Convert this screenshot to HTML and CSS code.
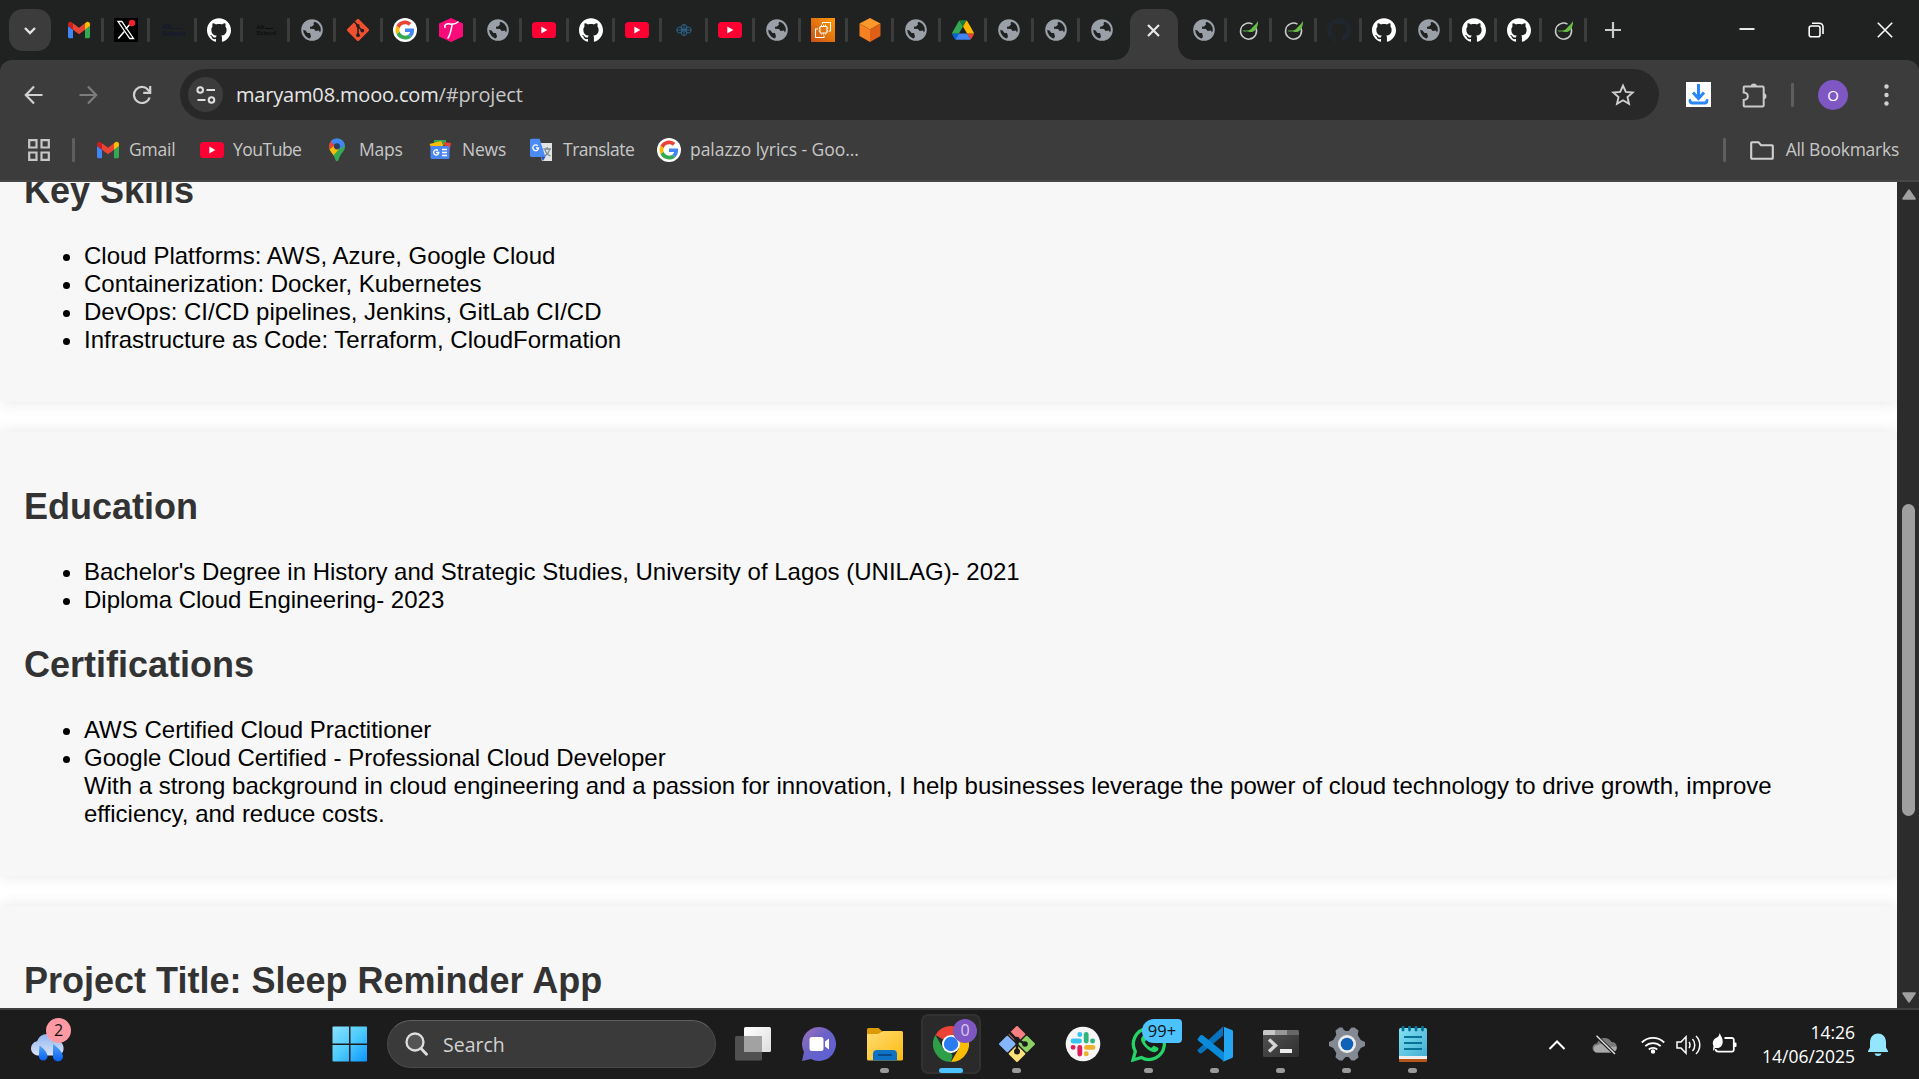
FILE: index.html
```html
<!DOCTYPE html>
<html lang="en">
<head>
<meta charset="utf-8">
<title>maryam08.mooo.com/#project</title>
<link rel="stylesheet" href="styles.css">
</head>
<body>
<svg class="sprite" width="0" height="0" aria-hidden="true">
  <defs>
    <linearGradient id="winA" x1="0" y1="0" x2="1" y2="1"><stop offset="0" stop-color="#8be2ff"/><stop offset=".5" stop-color="#4ccbfd"/><stop offset="1" stop-color="#0f94ff"/></linearGradient>
    <linearGradient id="ec2g" x1="0" y1="1" x2="1" y2="0"><stop offset="0" stop-color="#c8511b"/><stop offset="1" stop-color="#f90"/></linearGradient>
    <linearGradient id="chatg" x1="0" y1="0" x2="1" y2="1"><stop offset="0" stop-color="#a06fb8"/><stop offset=".45" stop-color="#6a63c8"/><stop offset="1" stop-color="#5b5fd6"/></linearGradient>
    <linearGradient id="foldg" x1="0" y1="0" x2="1" y2="1"><stop offset="0" stop-color="#ffdc72"/><stop offset="1" stop-color="#fdbb12"/></linearGradient>
    <linearGradient id="noteg" x1="0" y1="0" x2="1" y2="1"><stop offset="0" stop-color="#83e2f5"/><stop offset="1" stop-color="#41acd0"/></linearGradient>
    <linearGradient id="termg" x1="0" y1="0" x2="1" y2="1"><stop offset="0" stop-color="#535353"/><stop offset="1" stop-color="#303030"/></linearGradient>
    <linearGradient id="cloudg" x1="0" y1="0" x2="0" y2="1"><stop offset="0" stop-color="#8fb5f0"/><stop offset="1" stop-color="#d9e3f6"/></linearGradient>
    <linearGradient id="dropg" x1="0" y1="0" x2="0" y2="1"><stop offset="0" stop-color="#56a4f8"/><stop offset="1" stop-color="#0560f5"/></linearGradient>
    <linearGradient id="viewg" x1="0" y1="0" x2="1" y2="1"><stop offset="0" stop-color="#fff"/><stop offset="1" stop-color="#dedede"/></linearGradient>
  </defs>
  <symbol id="globe" viewBox="0 0 24 24"><circle cx="12" cy="12" r="9.800" fill="#202121" stroke="#9aa0a8" stroke-width="2"/><path fill="#9aa0a8" d="M2 11.500C2 6 6.500 2 12 2c2 0 3 .4 3.500.8L13.500 5 14 6.500 12 8.500l-2 .3v2l4 .3 1.600 2 3.400-.5.8 1.700 2-1.500C21 18 17 22 12 22l-2.500-.6L11 18.600l-1-3.600H7.500L5.500 12.500 2 11.500z"/></symbol>
  <symbol id="github" viewBox="0 0 24 24"><path d="M12 .297c-6.630 0-12 5.373-12 12 0 5.303 3.438 9.800 8.205 11.385.6.113.82-.258.82-.577 0-.285-.01-1.040-.015-2.040-3.338.724-4.042-1.610-4.042-1.610C4.422 18.070 3.633 17.700 3.633 17.700c-1.087-.744.084-.729.084-.729 1.205.084 1.838 1.236 1.838 1.236 1.070 1.835 2.809 1.305 3.495.998.108-.776.417-1.305.76-1.605-2.665-.3-5.466-1.332-5.466-5.930 0-1.310.465-2.380 1.235-3.220-.135-.303-.54-1.523.105-3.176 0 0 1.005-.322 3.300 1.230.96-.267 1.980-.399 3-.405 1.020.006 2.040.138 3 .405 2.280-1.552 3.285-1.230 3.285-1.230.645 1.653.24 2.873.12 3.176.765.84 1.230 1.910 1.230 3.220 0 4.610-2.805 5.625-5.475 5.920.42.36.81 1.096.81 2.220 0 1.606-.015 2.896-.015 3.286 0 .315.21.69.825.57C20.565 22.092 24 17.592 24 12.297c0-6.627-5.373-12-12-12"/></symbol>
  <symbol id="gmail" viewBox="52 42 88 66"><path fill="#4285f4" d="M58 108h14V74L52 59v43c0 3.320 2.690 6 6 6"/><path fill="#34a853" d="M120 108h14c3.320 0 6-2.690 6-6V59l-20 15"/><path fill="#fbbc04" d="M120 48v26l20-15v-8c0-7.420-8.470-11.650-14.400-7.200"/><path fill="#ea4335" d="M72 74V48l24 18 24-18v26L96 92"/><path fill="#c5221f" d="M52 51v8l20 15V48l-5.600-4.200c-5.940-4.450-14.400-.22-14.400 7.200"/></symbol>
  <symbol id="google" viewBox="0 0 48 48"><circle cx="24" cy="24" r="24" fill="#fff"/><g transform="translate(5 5) scale(.79)"><path fill="#EA4335" d="M24 9.500c3.540 0 6.710 1.220 9.210 3.600l6.850-6.850C35.900 2.380 30.470 0 24 0 14.620 0 6.510 5.380 2.560 13.220l7.980 6.190C12.430 13.720 17.740 9.500 24 9.500z"/><path fill="#4285F4" d="M46.980 24.550c0-1.570-.15-3.090-.38-4.550H24v9.020h12.940c-.58 2.960-2.260 5.480-4.780 7.180l7.730 6c4.510-4.180 7.090-10.360 7.090-17.650z"/><path fill="#FBBC05" d="M10.530 28.590c-.48-1.450-.76-2.990-.76-4.590s.27-3.140.76-4.590l-7.980-6.190C.92 16.460 0 20.120 0 24c0 3.880.92 7.540 2.560 10.780l7.970-6.190z"/><path fill="#34A853" d="M24 48c6.480 0 11.930-2.130 15.890-5.810l-7.730-6c-2.150 1.450-4.920 2.300-8.160 2.300-6.260 0-11.570-4.220-13.470-9.910l-7.980 6.190C6.510 42.620 14.620 48 24 48z"/></g></symbol>
  <symbol id="youtube" viewBox="0 0 24 24"><rect y="4" width="24" height="16" rx="3.600" fill="#ff0033"/><path fill="#fff" d="M9.300 8.500v7l6-3.500z"/></symbol>
  <symbol id="spring" viewBox="0 0 24 24"><path fill="none" stroke="#c8cacb" stroke-width="1.500" d="M15.500 6.200A8 8 0 1 0 18.800 9.800"/><path fill="#68bd45" d="M21 3C19.500 6 17 7.500 15 10c-2 2.500-4 2.800-7.500 2.500H5.500c1 1.500 2.500 1 4 .8 3 1 6.500 1 8-.5C20 10.500 21.500 6 21 3z"/></symbol>
</svg>

<header class="tabstrip">
  <button class="tab-search"><svg width="14" height="9" viewBox="0 0 14 9"><path d="M2 2l5 5 5-5" fill="none" stroke="#e3e3e3" stroke-width="2.400"/></svg></button>
  <div class="tabs">
    <div class="tab"><svg class="i22"><use href="#gmail"/></svg></div>
    <div class="tab"><svg class="i24" viewBox="0 0 24 24"><path fill="#000" d="M0 0h24v24H0z"/><path d="M4 3.500h3.800L19.500 20.500h-3.700z" fill="none" stroke="#fff" stroke-width="1.300"/><path d="M18.500 3.500l-6.800 7.500M10.300 13.400l-6 7" stroke="#fff" stroke-width="1.500"/><circle cx="18" cy="5" r="3.200" fill="#f4212e"/></svg></div>
    <div class="tab"><span class="alt alt-navy">Alt<i></i><br>School</span></div>
    <div class="tab"><svg class="i24 white"><use href="#github"/></svg></div>
    <div class="tab"><span class="alt alt-black">Alt<i></i><br>School</span></div>
    <div class="tab"><svg class="i24"><use href="#globe"/></svg></div>
    <div class="tab"><svg class="i24" viewBox="0 0 24 24"><rect x="3.800" y="3.800" width="16.400" height="16.400" rx="1.300" transform="rotate(45 12 12)" fill="#f05030"/><path d="M8.200 3.800L12 7.500v9.800M12 8.500l4.300 4.200" fill="none" stroke="#202121" stroke-width="1.600"/><circle cx="11.900" cy="7.900" r="1.800" fill="#202121"/><circle cx="12" cy="17.200" r="1.900" fill="#202121"/><circle cx="16.300" cy="12.600" r="1.900" fill="#202121"/></svg></div>
    <div class="tab"><svg class="i24"><use href="#google"/></svg></div>
    <div class="tab"><svg class="i24" viewBox="0 0 24 24"><path fill="#fb0a7a" d="M12 0l12 5.500v13L12 24 0 18.500v-13z"/><path d="M6 9.500C5 6.500 8 5.500 11 6s5.500 0 8-2M13.500 6C12 10 12 16 9 20" fill="none" stroke="#fff" stroke-width="1.500" stroke-linecap="round"/></svg></div>
    <div class="tab"><svg class="i24"><use href="#globe"/></svg></div>
    <div class="tab"><svg class="i24"><use href="#youtube"/></svg></div>
    <div class="tab"><svg class="i24 white"><use href="#github"/></svg></div>
    <div class="tab"><svg class="i24"><use href="#youtube"/></svg></div>
    <div class="tab"><svg class="i24" viewBox="0 0 24 24" fill="none" stroke="#2c6288" stroke-width="1"><circle cx="12" cy="9.500" r="3"/><circle cx="7.800" cy="12" r="3"/><circle cx="16.200" cy="12" r="3"/><circle cx="12" cy="14.500" r="3"/><path d="M4.800 12h14.400M12 6.500v11"/></svg></div>
    <div class="tab"><svg class="i24"><use href="#youtube"/></svg></div>
    <div class="tab"><svg class="i24"><use href="#globe"/></svg></div>
    <div class="tab"><svg class="i24" viewBox="0 0 24 24"><path fill="url(#ec2g)" d="M0 0h24v24H0z"/><g fill="none" stroke="#fff" stroke-width="1.100"><rect x="9" y="8.500" width="7" height="6.500" rx=".8"/><path d="M10.500 8V6.800M12.500 8V6.800M14.500 8V6.800M10.500 16.500v-1M12.500 16.500v-1M14.500 16.500v-1M7.800 10H9M7.800 13H9M16 10h1.300M16 13h1.300"/><path d="M11.500 6V4.500h8V13h-1.500M7 11H4.500v8.500H13V17.500"/></g></svg></div>
    <div class="tab"><svg class="i24" viewBox="0 0 24 24"><path fill="#fb982b" d="M12 0l10.500 5.500L12 11.500 1.500 5.500z"/><path fill="#f58120" d="M1.500 5.500L12 11.500V24L1.500 18z"/><path fill="#e05f16" d="M22.500 5.500L12 11.500V24l10.500-6z"/></svg></div>
    <div class="tab"><svg class="i24"><use href="#globe"/></svg></div>
    <div class="tab"><svg class="i22" viewBox="0 0 87.300 78"><path d="m6.600 66.850 3.850 6.650c.8 1.400 1.950 2.500 3.300 3.300l13.750-23.800h-27.500c0 1.550.4 3.100 1.200 4.500z" fill="#0066da"/><path d="m43.650 25-13.750-23.800c-1.350.8-2.500 1.900-3.300 3.300l-25.400 44a9.060 9.060 0 0 0 -1.200 4.500h27.500z" fill="#34a853"/><path d="m73.550 76.800c1.350-.8 2.500-1.900 3.300-3.300l1.600-2.750 7.650-13.250c.8-1.400 1.200-2.950 1.200-4.500h-27.500l5.850 11.500z" fill="#ea4335"/><path d="m43.650 25 13.750-23.800c-1.350-.8-2.900-1.200-4.500-1.200h-18.500c-1.600 0-3.150.45-4.500 1.200z" fill="#188038"/><path d="m59.800 53h-32.300l-13.750 23.800c1.350.8 2.900 1.200 4.500 1.200h50.800c1.600 0 3.150-.45 4.500-1.200z" fill="#4285f4"/><path d="m73.400 26.500-12.700-22c-.8-1.400-1.950-2.500-3.300-3.300l-13.750 23.800 16.150 28h27.450c0-1.550-.4-3.100-1.200-4.500z" fill="#ffba00"/></svg></div>
    <div class="tab"><svg class="i24"><use href="#globe"/></svg></div>
    <div class="tab"><svg class="i24"><use href="#globe"/></svg></div>
    <div class="tab last"><svg class="i24"><use href="#globe"/></svg></div>
  </div>
  <div class="tab-active"><svg width="13" height="13" viewBox="0 0 13 13"><path d="M1 1l11 11M12 1L1 12" stroke="#e8e8e8" stroke-width="2.200"/></svg></div>
  <div class="tabs tabs-narrow">
    <div class="tab"><svg class="i24"><use href="#globe"/></svg></div>
    <div class="tab"><svg class="i24"><use href="#spring"/></svg></div>
    <div class="tab"><svg class="i24"><use href="#spring"/></svg></div>
    <div class="tab"><svg class="i24 dim"><use href="#github"/></svg></div>
    <div class="tab"><svg class="i24 white"><use href="#github"/></svg></div>
    <div class="tab"><svg class="i24"><use href="#globe"/></svg></div>
    <div class="tab"><svg class="i24 white"><use href="#github"/></svg></div>
    <div class="tab"><svg class="i24 white"><use href="#github"/></svg></div>
    <div class="tab"><svg class="i24"><use href="#spring"/></svg></div>
  </div>
  <svg class="new-tab" width="16" height="16" viewBox="0 0 16 16"><path d="M8 0v16M0 8h16" stroke="#c9cccc" stroke-width="2.200"/></svg>
  <div class="window-controls">
    <svg width="16" height="16" viewBox="0 0 16 16"><path d="M.5 7h15" stroke="#fff" stroke-width="1.800"/></svg>
    <svg width="16" height="16" viewBox="0 0 16 16" fill="none" stroke="#fff" stroke-width="1.600"><rect x="1.200" y="4" width="10.800" height="10.800" rx="2"/><path d="M4 1.200h7.500a3.500 3.500 0 0 1 3.500 3.500V12"/></svg>
    <svg width="16" height="16" viewBox="0 0 16 16"><path d="M.8.8l14.400 14.400M15.200.8L.8 15.200" stroke="#fff" stroke-width="1.600"/></svg>
  </div>
</header>

<div class="chrome-body">
  <div class="toolbar">
    <svg class="nav" width="20" height="20" viewBox="0 0 20 20" fill="none" stroke="#d0d0d0" stroke-width="2.200"><path d="M18.500 10H2M10 1.500L1.800 10l8.200 8.500"/></svg>
    <svg class="nav" width="20" height="20" viewBox="0 0 20 20" fill="none" stroke="#7c7c7c" stroke-width="2.200"><path d="M1.500 10H18M10 1.500l8.200 8.500-8.200 8.500"/></svg>
    <svg class="nav" width="20" height="20" viewBox="0 0 20 20" fill="none" stroke="#d0d0d0" stroke-width="2.200"><path d="M17.600 12.500A8 8 0 1 1 16.500 5.300L18 7M18.200 1v6.800h-7"/></svg>
    <div class="omnibox">
      <span class="site-info"><svg width="20" height="18" viewBox="0 0 20 18" fill="none" stroke="#e0e0e0" stroke-width="2"><circle cx="4.200" cy="4" r="2.800"/><path d="M10.500 4H19M1.500 14h8"/><circle cx="15.500" cy="14" r="2.800"/></svg></span>
      <span class="url">maryam08.mooo.com<span class="path">/#project</span></span>
      <svg class="star" width="24" height="24" viewBox="0 0 24 24"><path d="M12 2.600l2.800 6.300 6.900.6-5.200 4.600 1.500 6.800-6-3.600-6 3.600 1.500-6.800L2.300 9.500l6.900-.6z" fill="none" stroke="#d0d0d0" stroke-width="1.900"/></svg>
    </div>
    <svg class="ext" width="25" height="25" viewBox="0 0 25 25"><path fill="#fff" d="M0 0h25v25H0z"/><path d="M12.500 2v13M7 10.500l5.500 6 5.500-6" fill="none" stroke="#2986f8" stroke-width="3"/><path d="M4 18.500c0 2 1 2.500 2.500 2.500h12c1.500 0 2.500-.5 2.500-2.500" fill="none" stroke="#2986f8" stroke-width="2.800" stroke-linecap="round"/></svg>
    <svg class="puzzle" width="26" height="26" viewBox="0 0 26 26"><path d="M2.500 4.500h18a1.200 1.200 0 0 1 1.200 1.200v17.600a1.200 1.200 0 0 1-1.200 1.200h-18a.8.8 0 0 1-.8-.8V18c5.500-.5 5.500-7 0-7.500V5.300a.8.800 0 0 1 .8-.8z" fill="none" stroke="#cacaca" stroke-width="2"/><path fill="#cacaca" d="M8.800 4.500a3 3 0 0 1 6 0zM21.500 11.300a3 3 0 0 1 0 6z"/></svg>
    <span class="divider"></span>
    <span class="avatar">O</span>
    <svg class="kebab" width="5" height="22" viewBox="0 0 5 22" fill="#d0d0d0"><circle cx="2.500" cy="2.500" r="2.200"/><circle cx="2.500" cy="11" r="2.200"/><circle cx="2.500" cy="19.500" r="2.200"/></svg>
  </div>

  <nav class="bookmarks">
    <svg class="apps" width="22" height="22" viewBox="0 0 22 22" fill="none" stroke="#c7c7c7" stroke-width="2.200"><path d="M1.200 1.200h7.300v7.300H1.200zM13.500 1.200h7.300v7.300h-7.300zM1.200 13.500h7.300v7.300H1.200zM13.500 13.500h7.300v7.300h-7.300z"/></svg>
    <span class="divider d1"></span>
    <a class="bm b-gmail"><svg class="i22"><use href="#gmail"/></svg><span>Gmail</span></a>
    <a class="bm b-yt"><svg class="i24"><use href="#youtube"/></svg><span>YouTube</span></a>
    <a class="bm b-maps"><svg class="i24" viewBox="0 0 24 24"><defs><clipPath id="pin"><path d="M12 .5a8 8 0 0 1 8 8c0 5-4.500 6.500-6.300 13-.4 2-3 2-3.400 0C8.500 15 4 13.500 4 8.500a8 8 0 0 1 8-8z"/></clipPath></defs><g clip-path="url(#pin)"><path fill="#34a853" d="M0 0h24v24H0z"/><path fill="#fbbc04" d="M4 12l5-6 5 5-6 7z"/><path fill="#ea4335" d="M0 0h7l3 7-6 5z"/><path fill="#4285f4" d="M5 0h18v5l-8 6-8-6z"/></g><circle cx="12" cy="8.300" r="3.100" fill="#2a3f5f"/></svg><span>Maps</span></a>
    <a class="bm b-news"><svg class="i24" viewBox="0 0 24 24"><path fill="#34a853" d="M6 2h12v5H6z"/><path fill="#ea4335" d="M15 4l8 1-2 10z"/><path fill="#fbbc04" d="M1.500 6L13 3l3 6H3z"/><path fill="#4a86f0" d="M2.500 8h19v11.500a1.500 1.500 0 0 1-1.500 1.500H4a1.500 1.500 0 0 1-1.500-1.500z"/><path d="M14 11.500h5M14 14.500h5M14 17.500h5M10 12.500a2.600 2.600 0 1 0 .8 2H8" fill="none" stroke="#fff" stroke-width="1.300"/></svg><span>News</span></a>
    <a class="bm b-tr"><svg class="i24" viewBox="0 0 24 24"><path fill="#e3e3e3" d="M9 5h14v18H13z"/><path fill="#4b8bf5" d="M2 .8h8.500l6 18.200H2.500A1.500 1.500 0 0 1 1 17.500v-15A1.600 1.600 0 0 1 2 .8z"/><path fill="#274fc4" d="M12 18.800h4.500L14 23z"/><path d="M8.800 7.800a2.900 2.900 0 1 0 .8 2.200H7" fill="none" stroke="#fff" stroke-width="1.300"/><path d="M14.500 11H22M18.200 9v2M20.500 11c-.5 4-3 6-5 7M16 12c1 3 3 5 5.500 6" fill="none" stroke="#7a8a93" stroke-width="1.300"/></svg><span>Translate</span></a>
    <a class="bm b-pal"><svg class="i24"><use href="#google"/></svg><span>palazzo lyrics - Goo...</span></a>
    <span class="divider d2"></span>
    <a class="bm all"><svg width="24" height="19" viewBox="0 0 24 19"><path d="M2 1.200h6.500l2.500 3h11a.8.800 0 0 1 .8.800v12a.8.800 0 0 1-.8.800H2a.8.800 0 0 1-.8-.8V2a.8.800 0 0 1 .8-.8z" fill="none" stroke="#d0d0d0" stroke-width="2.100"/></svg><span>All Bookmarks</span></a>
  </nav>
</div>

<div class="viewport">
  <main class="page">
    <section class="card card-skills">
      <h2>Key Skills</h2>
      <ul>
        <li>Cloud Platforms: AWS, Azure, Google Cloud</li>
        <li>Containerization: Docker, Kubernetes</li>
        <li>DevOps: CI/CD pipelines, Jenkins, GitLab CI/CD</li>
        <li>Infrastructure as Code: Terraform, CloudFormation</li>
      </ul>
    </section>
    <section class="card">
      <h2>Education</h2>
      <ul>
        <li>Bachelor's Degree in History and Strategic Studies, University of Lagos (UNILAG)- 2021</li>
        <li>Diploma Cloud Engineering- 2023</li>
      </ul>
      <h2>Certifications</h2>
      <ul>
        <li>AWS Certified Cloud Practitioner</li>
        <li>Google Cloud Certified - Professional Cloud Developer<br>With a strong background in cloud engineering and a passion for innovation, I help businesses leverage the power of cloud technology to drive growth, improve efficiency, and reduce costs.</li>
      </ul>
    </section>
    <section class="card">
      <h2>Project Title: Sleep Reminder App</h2>
    </section>
  </main>
  <aside class="scrollbar">
    <svg width="14" height="11" viewBox="0 0 14 11"><path d="M7 1.300L12.800 9.800H1.200z" fill="#9f9f9f" stroke="#9f9f9f" stroke-width="2" stroke-linejoin="round"/></svg>
    <span class="thumb"></span>
    <svg width="14" height="11" viewBox="0 0 14 11"><path d="M7 9.700L12.800 1.200H1.200z" fill="#9f9f9f" stroke="#9f9f9f" stroke-width="2" stroke-linejoin="round"/></svg>
  </aside>
</div>

<footer class="taskbar">
  <div class="weather">
    <svg width="38" height="30" viewBox="0 0 38 30"><path d="M8 23.500a7.200 7.200 0 0 1 0-14.200A11 11 0 0 1 28.500 8.500 8 8 0 0 1 30 23.500z" fill="url(#cloudg)"/><path d="M10.500 13.500c5.500 4 8 8 8 10.800a4.300 4.300 0 0 1-8.600 0zM24 12c7 5 10 9.500 10 12.500a5 5 0 0 1-10 0z" fill="url(#dropg)"/></svg>
    <span class="count">2</span>
  </div>
  <div class="apps-row">
    <span class="app start"><svg width="36" height="36" viewBox="0 0 36 36"><path fill="url(#winA)" d="M1.500.5H17v17H.5v-16a1 1 0 0 1 1-1zM18.500.5H34a1 1 0 0 1 1 1v16H18.500zM.5 19H17v16.500H1.500a1 1 0 0 1-1-1zM18.500 19H35v15.500a1 1 0 0 1-1 1H18.500z"/></svg></span>
    <div class="search"><svg width="23" height="24" viewBox="0 0 23 24"><circle cx="10" cy="10" r="8.500" fill="#555" stroke="#dedede" stroke-width="2.300"/><path d="M16 16.500l5.500 5.800" stroke="#dedede" stroke-width="2.800" stroke-linecap="round"/></svg><span>Search</span></div>
    <span class="app"><svg width="36" height="36" viewBox="0 0 36 36"><rect x="9" y="1" width="27" height="25" rx="1.500" fill="url(#viewg)"/><rect x="0" y="10" width="27" height="24.500" rx="1.500" fill="#555" fill-opacity=".92"/><path fill="#a2a2a2" d="M9 10h18v16H9z"/></svg></span>
    <span class="app"><svg width="36" height="36" viewBox="0 0 36 36"><path d="M18 1a17 17 0 1 1-8 32L1 35l2-9A17 17 0 0 1 18 1z" fill="url(#chatg)"/><rect x="8.500" y="11" width="14" height="14" rx="2.500" fill="#fff"/><path fill="#fff" d="M24 15.500l4-3v11l-4-3z"/></svg></span>
    <span class="app run"><svg width="36" height="36" viewBox="0 0 36 36"><path fill="#dc9a06" d="M0 3.500A1.500 1.500 0 0 1 1.500 2h10l4 3.500L12 9H0z"/><path fill="url(#foldg)" d="M0 8h11l5-3h18.500A1.500 1.500 0 0 1 36 6.500V33a1.500 1.500 0 0 1-1.500 1.500h-33A1.500 1.500 0 0 1 0 33z"/><path fill="#0f72c4" d="M6 34.500V28a4 4 0 0 1 4-4h16a4 4 0 0 1 4 4v6.500z"/><path d="M11 29h14" stroke="#08498c" stroke-width="2"/></svg></span>
    <span class="app run current"><svg width="36" height="36" viewBox="0 0 36 36"><path fill="#ea4335" d="M18 18L2.400 9A18 18 0 0 1 33.600 9z"/><path fill="#fbbc04" d="M18 9h15.600A18 18 0 0 1 18 36l7.800-13.500z"/><path fill="#2d9f48" d="M2.400 9L10.200 22.500 18 27l1.500 2.500L18 36A18 18 0 0 1 2.400 9z"/><circle cx="18" cy="18" r="9" fill="#fff"/><circle cx="18" cy="18" r="7.200" fill="#2a7cf0"/></svg><span class="badge profile">0</span></span>
    <span class="app run"><svg width="36" height="36" viewBox="0 0 36 36"><g transform="rotate(45 18 18)"><rect x="5" y="5" width="12.300" height="12.300" rx="1" fill="#f88080"/><rect x="18.700" y="5" width="12.300" height="12.300" rx="1" fill="#8dd165"/><rect x="5" y="18.700" width="12.300" height="12.300" rx="1" fill="#85b5fb"/><rect x="18.700" y="18.700" width="12.300" height="12.300" rx="1" fill="#ffe27a"/></g><path d="M10 6l8 8v12M18 13l8 5" fill="none" stroke="#1c1c1c" stroke-width="2.600"/><circle cx="18" cy="13.500" r="2.700" fill="#1c1c1c"/><circle cx="18" cy="25.500" r="3" fill="#1c1c1c"/><circle cx="26" cy="18" r="2.800" fill="#1c1c1c"/></svg></span>
    <span class="app"><svg width="36" height="36" viewBox="0 0 36 36"><circle cx="18" cy="18" r="17.300" fill="#f6f6f6"/><g fill="none" stroke-width="4.800" stroke-linecap="round"><path stroke="#36c5f0" d="M8 15h6.500M14.800 8.500v.2"/><path stroke="#2eb67d" d="M21.200 8.500V15M27.500 15h.2"/><path stroke="#ecb22e" d="M21.500 21.400H28M21.300 27.700v.2"/><path stroke="#e01e5a" d="M14.800 21.500V28M8.200 21.300H8"/></g></svg></span>
    <span class="app run"><svg width="36" height="36" viewBox="0 0 36 36"><path d="M2 34l2.300-8.500a15.500 15.500 0 1 1 6 6z" fill="none" stroke="#25d366" stroke-width="3.300"/><path d="M12.500 9.500c-3 1.500-3.500 5 0 9.500s8.500 8 12 7c3-1 3.500-3.500 2.500-4.300l-4-2c-1-.3-1.800 2.200-3 2-2.500-1-5-3.500-6-5.800 0-1 1.700-1.500 1.500-2.500z" fill="#25d366"/></svg><span class="badge unread">99+</span></span>
    <span class="app run"><svg width="36" height="36" viewBox="0 0 36 36"><path fill="#0872bd" d="M1 23.500L26 .5v9L5 27c-1 .8-2 .6-2.800-.2L1 25.500c-.6-.6-.6-1.400 0-2z"/><path fill="#0a8bd9" d="M1 12.500L3 9.700c.8-.8 2-.9 3-.2L27 26.500v9L1 14.500c-.6-.6-.6-1.400 0-2z"/><path fill="#24a6f2" d="M26 .5L35 4a1.500 1.500 0 0 1 1 1.400v25.200A1.500 1.500 0 0 1 35 32l-9 3.800c-1 .3 1-.5 1-2V2.500C27 1 26 .2 26 .5z"/></svg></span>
    <span class="app run"><svg width="36" height="36" viewBox="0 0 36 36"><rect y="4" width="36" height="27" rx="1.500" fill="url(#termg)"/><path fill="#c7c7c7" d="M1.500 4H12v5H0V5.500A1.500 1.500 0 0 1 1.500 4z"/><path fill="#979797" d="M12 4h12v5H12z"/><path fill="#686868" d="M24 4h10.500A1.500 1.500 0 0 1 36 5.500V9H24z"/><path d="M6 13.500l6.500 6-6.500 6" fill="none" stroke="#d6d6d6" stroke-width="3.300"/><path d="M17 25h12" stroke="#ededed" stroke-width="4"/></svg></span>
    <span class="app run"><svg width="36" height="36" viewBox="0 0 36 36"><path fill="#838a94" d="M14.500 3.500l-1-2h-3L6.500 4.500l.8 4.500-3 5L0 16v4l4.300 2 3 5-.8 4.500 4 3h3l3-3.500h3l3 3.500h3l4-3-.8-4.500 3-5L36 20v-4l-4.300-2-3-5 .8-4.500-4-3h-3l-3 3.500h-3z"/><circle cx="18" cy="18" r="9" fill="#ececec"/><circle cx="18" cy="18" r="6.300" fill="#0f62b8"/></svg></span>
    <span class="app run"><svg width="36" height="36" viewBox="0 0 36 36"><rect x="4" y="2" width="28" height="30" rx="1.500" fill="url(#noteg)"/><path fill="#eee" d="M4 30h28v3H4z"/><path fill="#b8561a" d="M4 33h28v2a1 1 0 0 1-1 1H5a1 1 0 0 1-1-1z"/><path d="M9 11h18M9 17h18M9 23h18" stroke="#067396" stroke-width="2"/><path d="M8 1v3M14.500 1v3M21 1v3M27.500 1v3" stroke="#067396" stroke-width="2.800" stroke-linecap="round"/></svg></span>
  </div>
  <div class="tray">
    <svg class="chev" width="18" height="12" viewBox="0 0 18 12"><path d="M1.500 10L9 2.500l7.500 7.500" fill="none" stroke="#fff" stroke-width="2"/></svg>
    <svg class="cloud" width="26" height="20" viewBox="0 0 26 20"><path d="M5 17.500A4.500 4.500 0 0 1 5 8.500a8 8 0 0 1 14.500-1.500 5.300 5.300 0 0 1 1 10.500z" fill="#7b7b7b"/><path d="M4 17.500A4 4 0 0 1 3 11l8-3 6 4 7.500-.5a5 5 0 0 1-4 6z" fill="#a9a9a9"/><path d="M4 .8L23 19" stroke="#1c1c1c" stroke-width="3.500"/><path d="M4.500.8L23 19" stroke="#ddd" stroke-width="1.500"/></svg>
    <svg class="wifi" width="24" height="18" viewBox="0 0 24 18" fill="none" stroke="#fff" stroke-width="1.800"><path d="M.8 6.500a16 16 0 0 1 22.400 0M4.300 10.200a11 11 0 0 1 15.400 0M7.800 13.500a6 6 0 0 1 8.400 0"/><circle cx="12" cy="15.500" r="1.300" fill="#fff"/></svg>
    <svg class="sound" width="25" height="20" viewBox="0 0 25 20" fill="none" stroke="#fff" stroke-width="1.500"><path d="M1 7h4l5-5.200v16.400L5 13H1zM13 7c1.300 1.500 1.300 4.500 0 6M16.500 4c3 3 3 9 0 12M20 1c5 5 5 13 0 18"/></svg>
    <svg class="batt" width="25" height="21" viewBox="0 0 25 21"><path d="M12.500 5H20a1.800 1.800 0 0 1 1.800 1.800v10a1.800 1.800 0 0 1-1.800 1.800H6.500c-1.800 0-3-.8-3-2.500" fill="none" stroke="#fff" stroke-width="1.800"/><path fill="#fff" d="M22 9.500h1.500a1 1 0 0 1 1 1v2.500a1 1 0 0 1-1 1H22zM7.500 0c1.500 3 4 6 3 10.500-.5 2.500-2 4-4.500 4.500H3l-1.500 3L1 16c0-1 .5-2 .5-2.800C-.5 9 2 5.500 5 4.500 6.500 3.500 7.500 2 7.500 0z"/></svg>
    <div class="clock"><span class="time">14:26</span><span class="date">14/06/2025</span></div>
    <svg class="bell" width="20" height="24" viewBox="0 0 20 24"><path fill="#94e6ff" d="M10 .5a8 8 0 0 1 8 8v6l2 3.500v1H0v-1l2-3.500v-6a8 8 0 0 1 8-8zM6.500 20.500h7c-.5 1.700-1.700 2.500-3.500 2.500s-3-.8-3.500-2.500z"/></svg>
  </div>
</footer>
</body>
</html>
```
FILE: styles.css
```css
*, *::before, *::after { box-sizing: border-box; }
html, body { height: 100%; }
body {
  margin: 0;
  width: 1919px;
  height: 1079px;
  overflow: hidden;
  display: flex;
  flex-direction: column;
  background: #202121;
  font-family: "Open Sans", "Noto Sans", sans-serif;
}
svg { display: block; flex: none; }
.sprite { position: absolute; }
.i22 { width: 22px; height: 22px; }
.i24 { width: 24px; height: 24px; }
.white { fill: #fff; }
.dim { fill: #1f262d; }

/* Tab strip */
.tabstrip { height: 60px; flex: none; display: flex; align-items: center; background: #202121; }
.tab-search {
  width: 42px; height: 42px; margin: 0 5px 0 9px; padding: 0; border: 0;
  border-radius: 14px; background: #3c3c3c;
  display: flex; align-items: center; justify-content: center; flex: none;
}
.tabs { display: flex; }
.tab {
  width: 46.5px; height: 24px; display: flex; align-items: center; justify-content: center;
  position: relative;
}
.tabs-narrow .tab { width: 45px; }
.tab::after {
  content: ""; position: absolute; right: -1px; top: 0;
  width: 3px; height: 24px; border-radius: 1px; background: #3c3c3c;
}
.tab.last::after { display: none; }
.alt { font: bold 7px/7px "Liberation Sans", sans-serif; width: 21px; }
.alt i { display: inline-block; width: 10px; height: 1px; margin-left: 1px; background: currentColor; }
.alt-navy { color: #15182f; }
.alt-black { color: #0c0d0d; font-size: 6px; line-height: 6px; width: 18px; }
.alt-black i { width: 8px; }
.tab-active {
  width: 48px; height: 51px; margin: 9px 3.500px 0 4px; border-radius: 14px 14px 0 0;
  background: #3c3c3c; position: relative; flex: none;
  display: flex; align-items: center; justify-content: center; padding: 0 1px 9px 0;
}
.tab-active::before, .tab-active::after {
  content: ""; position: absolute; bottom: 0; width: 15px; height: 15px;
}
.tab-active::before { left: -15px; background: radial-gradient(circle at 0 0, transparent 14.500px, #3c3c3c 15px); }
.tab-active::after { right: -15px; background: radial-gradient(circle at 100% 0, transparent 14.500px, #3c3c3c 15px); }
.new-tab { margin-left: 19px; }
.window-controls { margin-left: auto; margin-right: 26px; display: flex; gap: 53px; }

/* Toolbar and bookmarks */
.chrome-body {
  height: 122px; flex: none; background: #3c3c3c; border-radius: 12px 12px 0 0;
  border-bottom: 2px solid #474747;
}
.toolbar { height: 69px; display: flex; align-items: center; padding-left: 24px; }
.nav { margin-right: 34px; }
.omnibox {
  width: 1479px; height: 51px; border-radius: 26px; background: #282828;
  margin-left: -6px; display: flex; align-items: center; padding: 0 24px 0 8px; flex: none;
}
.site-info {
  width: 35px; height: 35px; border-radius: 50%; background: #3c3c3c;
  display: flex; align-items: center; justify-content: center;
}
.url { margin: -1px 0 0 13px; font-size: 20px; letter-spacing: -.18px; color: #e6e6e6; white-space: nowrap; }
.path { color: #c7c7c7; }
.star { margin-left: auto; }
.ext { margin-left: 27px; }
.puzzle { margin-left: 31px; }
.divider { width: 3px; height: 24px; background: #5e5e5e; border-radius: 1px; flex: none; }
.toolbar .divider { margin-left: 23px; }
.avatar {
  width: 30px; height: 30px; border-radius: 50%; background: #7e57c2; color: #fff;
  margin-left: 24px; font-size: 15px; line-height: 30px; text-align: center;
}
.kebab { margin-left: 36px; }
.bookmarks { height: 42px; display: flex; align-items: center; padding: 0 20px 0 28px; color: #c7c7c7; }
.bm { display: flex; align-items: center; gap: 10px; font-size: 17.500px; white-space: nowrap; }
.bm span { margin-top: -2px; letter-spacing: -.2px; }
.d1 { margin-left: 22px; }
.b-gmail { margin-left: 22px; width: 103px; }
.b-yt { width: 125px; }
.b-yt span, .b-tr span { letter-spacing: -.5px; }
.b-yt { gap: 9px; }
.b-maps { width: 103px; }
.b-news { width: 101px; }
.b-tr { width: 128px; }
.b-pal { gap: 9px; }
.b-pal span { letter-spacing: -.04px; }
.d2 { margin-left: auto; }
.all { margin-left: 24px; gap: 12px; }
.all span { letter-spacing: -.25px; }

/* Web page */
.viewport { height: 826px; flex: none; display: flex; overflow: hidden; background: #fff; }
.page {
  width: 1897px; height: 826px; overflow: hidden;
  font-family: "Liberation Sans", Arial, sans-serif; font-size: 24px; line-height: 28px; color: #000;
}
.card {
  display: flow-root; padding: 24px; margin-bottom: 30px; background: #f7f7f7;
  box-shadow: 0 0 15px rgba(0, 0, 0, .1);
}
.card-skills { margin-top: -66px; }
.card h2 { margin: 30px 0 31px; font-size: 36px; line-height: 41px; color: #333; }
.card ul { margin: 0 0 24px; padding-left: 60px; }
.card ul + h2 { margin-top: 30px; }
.scrollbar {
  width: 22px; background: #2c2c2c; display: flex; flex-direction: column;
  align-items: center; padding: 7px 0 5px 1px;
}
.thumb { width: 13px; height: 312px; border-radius: 7px; background: #9f9f9f; margin: 304px 0 auto; }

/* Taskbar */
.taskbar {
  height: 71px; flex: none; background: #1c1c1c; border-top: 2px solid #3f3f3f;
  display: flex; align-items: center; position: relative;
}
.weather { width: 320px; height: 69px; padding: 22px 0 0 29px; position: relative; }
.count {
  position: absolute; left: 46px; top: 8px; width: 25px; height: 25px; border-radius: 50%;
  background: #ff99a4; color: #111; font-size: 16px; line-height: 24px; text-align: center;
}
.apps-row { display: flex; align-items: center; height: 69px; }
.app {
  width: 66px; height: 69px; padding-bottom: 1px; display: flex; align-items: center; justify-content: center; position: relative;
}
.start { width: 60px; }
.run::after {
  content: ""; position: absolute; bottom: 6px; left: 28px; width: 9px; height: 5px;
  border-radius: 3px; background: #9a9a9a;
}
.current::before {
  content: ""; position: absolute; left: 3px; top: 4px; width: 60px; height: 60px;
  border: 2px solid #323232; border-radius: 7px; background: #2a2a2a;
}
.current svg { position: relative; }
.current::after { left: 21px; width: 24px; background: #4cc2ff; }
.badge { position: absolute; text-align: center; }
.profile {
  left: 35px; top: 9px; width: 24px; height: 24px; border-radius: 50%;
  background: #7e57c2; color: #d8caf0; font-size: 16px; line-height: 23px;
}
.unread {
  left: 26px; top: 9px; width: 40px; height: 24px; border-radius: 12px 4px 4px 12px;
  background: #4cc2ff; color: #111; font-size: 16.500px; line-height: 23px;
}
.search {
  width: 329px; height: 48px; margin: -1px 4px 0 7px; border-radius: 24px; background: #3a3a3a;
  border: 1px solid #4a4a4a; border-top-color: #606060;
  display: flex; align-items: center; gap: 15px; padding-left: 17px;
  color: #d2d2d2; font-size: 19.500px;
}
.tray { display: flex; align-items: center; margin-left: auto; padding-right: 31px; }
.cloud { margin-left: 26px; }
.wifi { margin-left: 23px; }
.sound { margin-left: 11px; }
.batt { margin-left: 11px; margin-top: -3px; }
.clock {
  width: 118px; margin-top: -2px; display: flex; flex-direction: column; align-items: flex-end;
  color: #fff; font-size: 17.500px; line-height: 24px; white-space: nowrap;
}
.bell { margin-left: 13px; }
```
